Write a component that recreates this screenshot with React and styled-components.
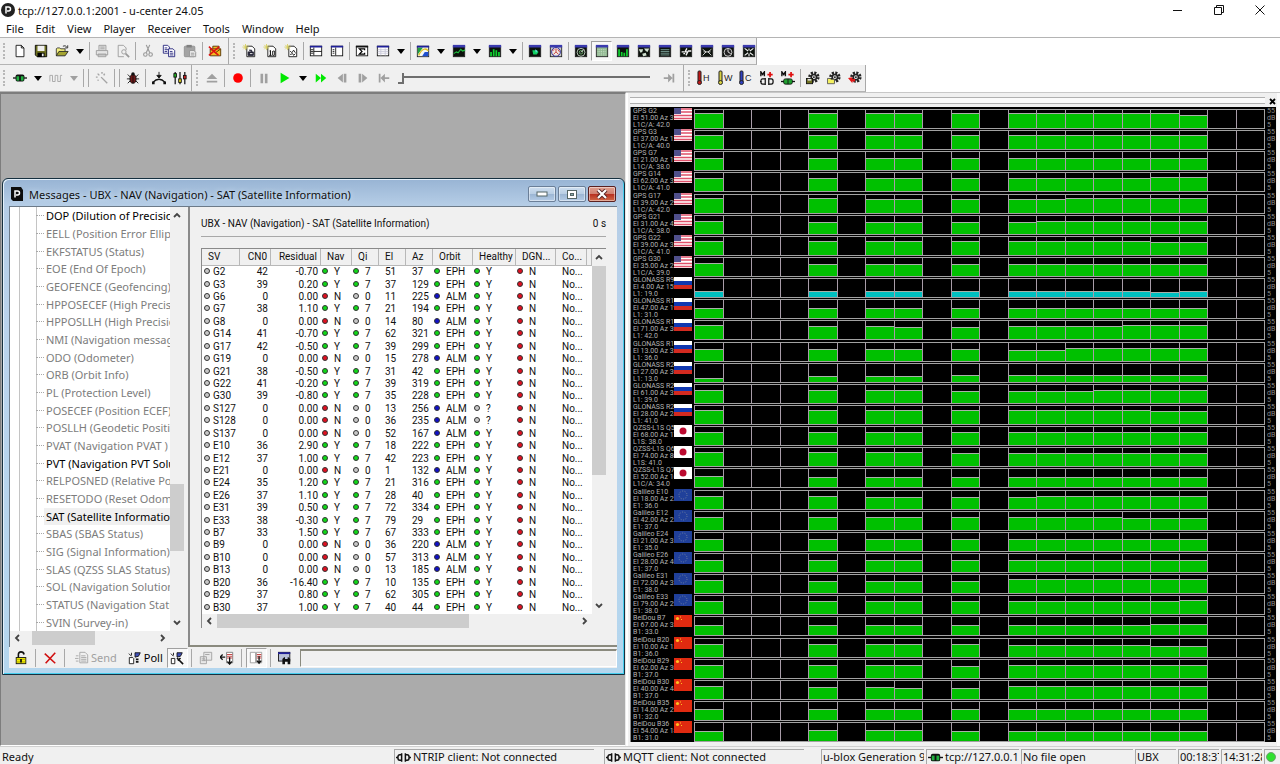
import React from "react";
import styled, { createGlobalStyle, css } from "styled-components";

const GlobalStyle = createGlobalStyle`
	* {
		box-sizing: border-box;
	}
	body {
		margin: 0;
		background: #fff;
		font-family: "Noto Sans", "Open Sans", sans-serif;
		font-size: 11px;
		color: #111;
	}
	button {
		font: inherit;
		color: inherit;
		background: none;
		border: 0;
		padding: 0;
	}
	svg {
		flex: none;
	}
`;

const App = styled.div`
	height: 100vh;
	display: flex;
	flex-direction: column;
	overflow: hidden;
`;

/* ---------- title bar and menu ---------- */

const TitleBar = styled.header`
	height: 20px;
	display: flex;
	align-items: center;
	padding-left: 1px;
`;

const TitleText = styled.h1`
	flex: 1;
	margin: 0;
	padding-left: 3px;
	font-size: 11px;
	font-weight: 400;
`;

const CaptionButton = styled.button`
	width: 41px;
	height: 20px;
	display: flex;
	align-items: center;
	justify-content: center;
`;

const MenuBar = styled.nav`
	height: 18px;
	display: flex;
	align-items: center;
	gap: 12px;
	padding-left: 6px;
	border-bottom: 1px solid #b4b4b4;
`;

/* ---------- toolbars ---------- */

const ToolRow = styled.div`
	height: 27px;
	display: flex;
`;

const ToolGroup = styled.div`
	display: flex;
	align-items: center;
	background: #f0f0f0;
	border-right: 1px solid #a9a9a9;
	border-bottom: 1px solid #b4b4b4;
	padding-right: ${(p) => p.$end || 0}px;
`;

const Grip = styled.span`
	width: 9px;
	height: 16px;
	flex: none;
	border-left: 2px dotted #b8b8b8;
	margin-left: ${(p) => (p.$inset ? 4 : 3)}px;
	margin-right: ${(p) => (p.$inset ? -4 : -3)}px;
`;

const ToolButton = styled.button`
	width: 21px;
	height: 20px;
	flex: none;
	display: flex;
	align-items: center;
	justify-content: center;
	${(p) =>
		p.$pressed &&
		css`
			background: #f8f8f8;
			border: 1px solid #a0a0a0;
			border-right-color: #fff;
			border-bottom-color: #fff;
		`}
`;

const DropButton = styled.button`
	width: 15px;
	height: 20px;
	flex: none;
	display: flex;
	align-items: center;
	justify-content: center;
	&::after {
		content: "";
		border: 4px solid transparent;
		border-top: 5px solid ${(p) => (p.$off ? "#a0a0a0" : "#000")};
		border-bottom: 0;
	}
`;

const Sep = styled.span`
	width: ${(p) => p.$w || 4}px;
	height: 18px;
	flex: none;
	display: flex;
	justify-content: center;
	&::after {
		content: "";
		width: 1px;
		background: #a8a8a8;
	}
`;

const ViewButtons = styled.div`
	width: 185px;
	display: grid;
	grid-template-columns: repeat(9, 1fr);
	justify-items: center;
`;

const Slider = styled.input`
	appearance: none;
	width: 252px;
	height: 16px;
	margin: 0 8px 0 4px;
	background: linear-gradient(#6e6e6e, #6e6e6e) 5px 6px / 100% 2px no-repeat;
	&::-webkit-slider-thumb {
		appearance: none;
		width: 6px;
		height: 11px;
		background: #f0f0f0;
		border-right: 2px solid #6e6e6e;
		border-bottom: 2px solid #6e6e6e;
	}
`;

/* ---------- workspace ---------- */

const Workspace = styled.main`
	flex: 1;
	min-height: 0;
	display: flex;
	background: #f0f0f0;
`;

const Mdi = styled.section`
	position: relative;
	flex: 629 1 0;
	min-width: 0;
	background: #ababab;
	border: 1px solid #7d7d7d;
	border-top-width: 2px;
	border-right-color: #e8e8e8;
	border-bottom-color: #fff;
`;

const ChildWindow = styled.article`
	position: absolute;
	top: 84px;
	left: 1px;
	right: 0;
	height: 497px;
	display: flex;
	flex-direction: column;
	padding: 0 7px 6px 6px;
	border: 1px solid #16303f;
	border-radius: 6px 6px 0 0;
	background: linear-gradient(#98b4d4, #b5cde6 26px, #bad3ec 150px, #b4d6ee);
	box-shadow: inset 1px 1px 0 #e4f0fa, inset -1px -1px 0 #45cdee;
`;

const ChildTitle = styled.header`
	height: 27px;
	flex: none;
	display: flex;
	align-items: center;
	gap: 2px;
	padding: 3px 1px 0;
`;

const ChildHeading = styled.h2`
	flex: 1;
	margin: 0;
	padding-left: 3px;
	font-size: 11px;
	font-weight: 400;
	text-shadow: 0 0 5px #dcecfa;
`;

const AeroButton = styled.button`
	width: 28px;
	height: 16px;
	display: flex;
	align-items: center;
	justify-content: center;
	border: 1px solid ${(p) => (p.$close ? "#5a2020" : "#6b7f98")};
	border-radius: 2px;
	box-shadow: inset 0 0 0 1px rgba(255, 255, 255, 0.45);
	background: ${(p) =>
		p.$close
			? "linear-gradient(#e0a090, #d08070 48%, #b83020 52%, #d06a48)"
			: "linear-gradient(#cfdff0, #b9cee4 48%, #9cb6d4 52%, #b4cce6)"};
`;

const ChildBody = styled.div`
	flex: 1;
	min-height: 0;
	display: flex;
	background: #f0f0f0;
	border-top: 1px solid #6c7a88;
	border-left: 1px solid #6c7a88;
`;

const TreePane = styled.div`
	width: 174px;
	flex: none;
	display: grid;
	grid-template-columns: 1fr 14px;
	grid-template-rows: 1fr 14px;
	padding-bottom: 2px;
`;

const Tree = styled.ul`
	min-width: 0;
	min-height: 0;
	margin: 0;
	padding: 0 0 0 26px;
	display: flex;
	flex-direction: column;
	overflow: hidden;
	list-style: none;
	background:
		linear-gradient(#c4c4c4, #c4c4c4) 9px 0 / 1px 100% no-repeat,
		linear-gradient(#c4c4c4, #c4c4c4) 26px 0 / 1px 100% no-repeat,
		#fff;
`;

const TreeItem = styled.li`
	flex: 1;
	display: flex;
	align-items: center;
	white-space: nowrap;
	color: ${(p) => (p.$active ? "#000" : "#7d7d7d")};
	&::before {
		content: "";
		width: 8px;
		flex: none;
		border-top: 1px dotted #a8a8a8;
	}
`;

const TreeLabel = styled.span`
	flex: 1;
	padding-left: 2px;
	line-height: 17px;
	background: ${(p) => (p.$selected ? "#f0f0f0" : "none")};
`;

const VScroll = styled.div`
	display: flex;
	flex-direction: column;
	align-items: stretch;
	background: #f0f0f0;
`;

const HScroll = styled.div`
	display: flex;
	background: #f0f0f0;
`;

const ScrollButton = styled.button`
	width: 14px;
	height: ${(p) => (p.$flat ? 14 : 16)}px;
	flex: none;
	display: flex;
	align-items: center;
	justify-content: center;
`;

const Space = styled.span`
	flex: ${(p) => p.$grow} 1 0;
	background: ${(p) => (p.$thumb ? "#cdcdcd" : "transparent")};
`;

const DetailPane = styled.div`
	flex: 1;
	min-width: 0;
	display: flex;
	flex-direction: column;
	margin-left: 4px;
	padding: 0 11px 17px;
	border-left: 2px solid #8a8a8a;
	border-bottom: 2px solid #8a8a7e;
	font-family: Roboto, "Liberation Sans", sans-serif;
	font-size: 10px;
`;

const DetailHeading = styled.div`
	height: 30px;
	display: flex;
	align-items: center;
	justify-content: space-between;
	padding-top: 4px;
	border-bottom: 1px solid #a8a8a8;
`;

const ListView = styled.div`
	flex: 1;
	min-height: 0;
	margin-top: 11px;
	display: grid;
	grid-template-columns: 1fr 14px;
	grid-template-rows: 1fr 14px;
	border-left: 1px solid #8a8a8a;
	border-top: 1px solid #8a8a8a;
	background: #f0f0f0;
`;

const SatTable = styled.table`
	width: 100%;
	height: 100%;
	table-layout: fixed;
	border-collapse: separate;
	border-spacing: 0;
	background: #fff;
	white-space: nowrap;
`;

const Th = styled.th`
	height: 17px;
	padding: 0 3px 0 6px;
	font-weight: 400;
	line-height: 14px;
	text-align: ${(p) => (p.$right ? "right" : "left")};
	background: #f0f0f0;
	border-right: 1px solid #b8b8b8;
	border-bottom: 1px solid #b8b8b8;
`;

const Td = styled.td`
	padding: 0 3px 0 ${(p) => p.$pad || 1}px;
	line-height: 12px;
	text-align: ${(p) => (p.$right ? "right" : "left")};
`;

const Dot = styled.i`
	display: inline-block;
	width: 6px;
	height: 6px;
	margin-right: ${(p) => p.$gap || 6}px;
	vertical-align: 1px;
	border: 1px solid #333;
	border-radius: 50%;
	background: ${(p) => p.$color};
`;

const ChildTools = styled.div`
	height: 21px;
	flex: none;
	display: flex;
	align-items: center;
	padding-left: 1px;
	background: #f0f0f0;
`;

const TextTool = styled.button`
	height: 20px;
	display: flex;
	align-items: center;
	gap: 2px;
	padding: 0 4px 0 7px;
	color: ${(p) => (p.disabled ? "#a0a0a0" : "#000")};
`;

const MessageField = styled.input`
	flex: 1;
	min-width: 0;
	height: 18px;
	margin-left: 4px;
	background: #f0f0f0;
	border: 1px solid #fff;
	border-top: 2px solid #8a8a7e;
	border-left-color: #8a8a7e;
`;

/* ---------- satellite level docking panel ---------- */

const Dock = styled.aside`
	flex: 651 1 0;
	min-width: 0;
	display: flex;
	flex-direction: column;
	padding: 0 4px 4px;
	border-top: 1px solid #c8c8c8;
	box-shadow: inset 2px 0 0 #fff, inset -3px 0 0 #fafafa;
`;

const DockGrip = styled.div`
	height: 14px;
	flex: none;
	display: flex;
	align-items: center;
	gap: 4px;
	&::before {
		content: "";
		flex: 1;
		height: 5px;
		border: solid #b0b0b0;
		border-width: 1px 0;
		background: #fafafa;
	}
`;

const LevelList = styled.ol`
	flex: 1;
	min-height: 0;
	margin: 0;
	padding: 1px 0 0 2px;
	display: flex;
	flex-direction: column;
	list-style: none;
	background: #000;
	color: #b4b4b4;
	font-family: Roboto, "Liberation Sans", sans-serif;
	font-size: 7px;
	line-height: 7px;
	border-left: 1px solid #8a8a8a;
`;

const LevelRow = styled.li`
	flex: 1;
	min-height: 0;
	display: grid;
	grid-template-columns: 41px 18px 1fr 11px;
`;

const LevelText = styled.div`
	overflow: hidden;
	white-space: pre;
`;

const Cells = styled.div`
	display: flex;
	height: 20px;
	margin: 1px 0 0 2px;
	border: 1px solid #a2a2a2;
	border-left: 0;
`;

const Cell = styled.div`
	flex: 1;
	display: flex;
	align-items: flex-end;
	border-left: 1px solid #a89ca8;
`;

const Bar = styled.span`
	width: 100%;
	background: ${(p) => (p.$weak ? "#00c0c0" : "#00c000")};
	border-top: 1px solid #a8b0a8;
`;

const LevelScale = styled.div`
	padding-left: 2px;
	white-space: pre;
	color: #8a8a8a;
`;

/* ---------- status bar ---------- */

const StatusBar = styled.footer`
	height: 18px;
	flex: none;
	display: flex;
	align-items: stretch;
	gap: 2px;
	padding: 2px 0 0 2px;
	background: #f0f0f0;
	border-top: 1px solid #d0d0d0;
`;

const Ready = styled.span`
	flex: 1;
	line-height: 15px;
`;

const Pane = styled.span`
	width: ${(p) => p.$w}px;
	flex: none;
	display: flex;
	align-items: center;
	gap: 2px;
	padding-left: 1px;
	margin-right: ${(p) => p.$after || 0}px;
	border-top: 1px solid #a8a8a8;
	border-left: 1px solid #a8a8a8;
	line-height: 14px;
	overflow: hidden;
	white-space: nowrap;
`;

/* ---------- icons ---------- */

const docPath = "M3.5 1.5h6l3 3v10h-9zM9.5 1.5v3h3";

const Star = () => (
	<path d='M4 0v7M0.5 3.5h7M1.5 1l5 5M6.5 1l-5 5' stroke='#d8d060' strokeWidth='1' />
);

const Frame = ({ body = "#0c120c", children }) => (
	<>
		<rect x='1.5' y='2.5' width='13' height='12' fill={body} stroke='#222' />
		<rect x='1' y='1' width='14' height='3' fill='#3a3aae' />
		{children}
	</>
);

const Gear = () => (
	<>
		<circle cx='9' cy='7' r='5' fill='none' stroke='#222' strokeWidth='3' strokeDasharray='2.4 1.5' />
		<circle cx='9' cy='7' r='3' fill='#ddd' stroke='#222' strokeWidth='1.8' />
		<circle cx='9' cy='7' r='1' fill='#222' />
	</>
);

const icons = {
	newFile: <path d={docPath} fill='#fff' stroke='#111' />,
	save: (
		<>
			<path d='M1.5 1.5h13v13h-11l-2-2z' fill='#6e7020' stroke='#000' />
			<rect x='4' y='2' width='8' height='6' fill='#f0f0f0' />
			<rect x='4' y='10' width='8' height='5' fill='#000' />
			<rect x='9' y='11' width='2' height='3' fill='#eee' />
		</>
	),
	open: (
		<>
			<path d='M1.5 13.500V5.500l1-1h3l1 1h5v3' fill='#f4f080' stroke='#333' />
			<path d='M1.500 13.500l3-5h10.500l-3.500 5z' fill='#a4a430' stroke='#222' />
			<path d='M9 2.500q3-1.500 4.500 1M14.500 1.500v3h-3' fill='none' stroke='#222' />
		</>
	),
	print: (
		<g fill='#e4e4e4' stroke='#999'>
			<path d='M4.500 7V1.500h8V7' />
			<path d='M6 3.500h5M6 5.500h5' />
			<path d='M1.500 7.500h13v5h-13zM3.500 11.500h9v3h-9z' />
		</g>
	),
	preview: (
		<g fill='none' stroke='#999'>
			<path d='M9 14.500H2.500v-13h6l3 3V7' />
			<circle cx='9' cy='9' r='2.500' />
			<path d='M11 11l4 4' strokeWidth='2' />
		</g>
	),
	cut: (
		<g fill='none' stroke='#999' strokeWidth='1.300'>
			<path d='M6 1l4 9M10 1L6 10' />
			<circle cx='5' cy='12' r='2' />
			<circle cx='11' cy='12' r='2' />
		</g>
	),
	copy: (
		<g fill='#fff' stroke='#20207a'>
			<path d='M1.500 1.500h5l2 2v7h-7zM3 4.500h3M3 6.500h4M3 8.500h3' />
			<path d='M7.500 5.500h5l2 2v7h-7zM9 8.500h3M9 10.500h4M9 12.500h4' />
		</g>
	),
	paste: (
		<>
			<rect x='1.500' y='2.500' width='12' height='12' rx='1' fill='#a4a4a4' stroke='#909090' />
			<rect x='4' y='1' width='6' height='3' fill='#808080' />
			<path d='M7.500 7.500h5l2 2v5h-7zM9 10.500h4M9 12.500h4' fill='#eee' stroke='#909090' />
		</>
	),
	mailX: (
		<>
			<path d='M2.500 5.500h12v8h-12zM5.500 5V2.500h7V5' fill='#f4b820' stroke='#503000' />
			<path d='M3 6l5.500 4L14 6' stroke='#503000' fill='none' />
			<path d='M1 3l11 10M13 3L1 13' stroke='#e01010' strokeWidth='1.600' />
		</>
	),
	newPacket: (
		<>
			<path d='M5.500 2.500h6l3 3v9h-9z' fill='#fff' stroke='#111' />
			<Star />
			<path d='M7 9h6v4H7zM8 7h3v2' fill='#223' stroke='#223' />
			<path d='M9 11h3' stroke='#fff' />
		</>
	),
	newBinary: (
		<>
			<path d='M5.500 2.500h6l3 3v9h-9z' fill='#fff' stroke='#111' />
			<Star />
			<path d='M7.500 8h1v5M11.500 8h1.500v5h-2V8M8.500 7v6M7 13h3' fill='none' stroke='#111' />
		</>
	),
	newText: (
		<>
			<path d='M5.500 2.500h6l3 3v9h-9z' fill='#fff' stroke='#111' />
			<Star />
			<path d='M7 8l2 2 2-3 2 3M7 12l3-1 1 2 2-2' fill='none' stroke='#111' />
		</>
	),
	layoutList: (
		<>
			<rect x='1.500' y='2.500' width='13' height='11' fill='#fff' stroke='#111' />
			<path d='M1 3h14' stroke='#20209a' strokeWidth='2' />
			<path d='M5.500 4v9M5.500 8.500h9M2 6.500h3M2 8.500h3M2 10.500h3' stroke='#111' />
		</>
	),
	layoutSide: (
		<>
			<rect x='1.500' y='2.500' width='13' height='11' fill='#fff' stroke='#111' />
			<path d='M1 3h14' stroke='#20209a' strokeWidth='2' />
			<path d='M6.500 4v9M3 6.500h2M3 8.500h2M3 10.500h2' stroke='#111' />
		</>
	),
	sigma: (
		<>
			<rect x='1.500' y='2.500' width='13' height='11' fill='#fff' stroke='#111' />
			<path d='M1 3h14' stroke='#111' strokeWidth='2' />
			<path d='M11 7V5.500H5l3 3-3 3h6V10' fill='none' stroke='#000' strokeWidth='1.400' />
		</>
	),
	tableWin: (
		<>
			<rect x='1.500' y='2.500' width='13' height='11' fill='#fff' stroke='#111' />
			<path d='M1 3h14' stroke='#20209a' strokeWidth='2' />
			<path d='M5.500 5v8M10.500 5v8M2 6.500h12M2 8.500h12M2 10.500h12' stroke='#c8c8d8' />
		</>
	),
	map: (
		<>
			<rect x='1.500' y='2.500' width='13' height='12' fill='#f4f8f4' stroke='#222' />
			<path d='M2 4h6l-6 8z' fill='#20a040' />
			<path d='M10 9h4v5H7z' fill='#2050d0' />
			<path d='M3 13q3-6 6-7t5 2' fill='none' stroke='#e0c020' strokeWidth='1.500' />
			<path d='M1 3h14' stroke='#20209a' strokeWidth='2' />
		</>
	),
	lineChart: (
		<Frame>
			<path d='M2 11l3-2 2 1 3-4 2 2 3-1' fill='none' stroke='#20c040' strokeWidth='1.300' />
		</Frame>
	),
	barChart: (
		<Frame>
			<path d='M3.500 14V9M6.500 14V6M9.500 14V7M12.500 14v-5' stroke='#10d030' strokeWidth='2' />
		</Frame>
	),
	cloud: (
		<Frame>
			<path d='M5 7h5l2 2-2 3H6z' fill='#10d060' />
			<path d='M8 6l3 2-2 2z' fill='#60e0e0' />
		</Frame>
	),
	globe: (
		<Frame body='#c8c8c8'>
			<circle cx='8' cy='9' r='5' fill='#f0e8e0' stroke='#20209a' />
			<path d='M8 5v4l-3 3M8 9l3 3M4 8l2-2M10 6l2 3' stroke='#c03030' fill='none' />
		</Frame>
	),
	compass: (
		<Frame>
			<circle cx='8' cy='9.500' r='4.500' fill='none' stroke='#c8d8c8' />
			<circle cx='8' cy='9.500' r='2' fill='none' stroke='#70b070' />
			<path d='M8 9.500l3-3' stroke='#fff' />
		</Frame>
	),
	dotGrid: (
		<Frame body='#90b890'>
			<path d='M3 6.500h10M3 8.500h10M3 10.500h10M3 12.500h10' stroke='#d0e4d0' strokeDasharray='1 1' />
		</Frame>
	),
	levels: (
		<Frame>
			<path d='M3.500 14V6M6.500 14V9M9.500 14V10M12.500 14V6' stroke='#10d030' strokeWidth='2' />
		</Frame>
	),
	world: (
		<Frame>
			<path d='M2 6h5l-1 3-2 1zM8 5h6l-2 4-2-1zM6 11l4-1 1 3-4 1z' fill='#d0e0d0' />
		</Frame>
	),
	text: (
		<Frame>
			<path d='M3 6.500h10M3 8.500h10M3 10.500h10M3 12.500h10' stroke='#80a8a0' />
		</Frame>
	),
	sky: (
		<Frame>
			<path d='M9 5l-2 4h3l-2 4M3 9h3M10 8h4M5 11h2' stroke='#f4f4f4' strokeWidth='1.500' fill='none' />
		</Frame>
	),
	deviation: (
		<Frame>
			<path d='M3 6l4 3-4 4M13 6L9 9l4 4M4 9h8' stroke='#e0e0e0' fill='none' />
		</Frame>
	),
	clock: (
		<Frame>
			<circle cx='8' cy='9.500' r='4.500' fill='#222' stroke='#e0e0e0' />
			<path d='M8 6v3l3 2' stroke='#fff' fill='none' />
		</Frame>
	),
	scatter: (
		<Frame>
			<path d='M3 5l4 3M13 5L9 8M3 13l4-3M13 13l-4-3M8 5v2M8 11v3' stroke='#f0f0f0' strokeWidth='1.300' />
		</Frame>
	),
	plug: (
		<>
			<path d='M0 8h16' stroke='#111' strokeWidth='1.500' />
			<rect x='3' y='4' width='10' height='8' rx='2' fill='#111' />
			<rect x='4' y='6' width='3' height='5' fill='#20b040' />
			<rect x='9' y='6' width='3' height='5' fill='#20b040' />
		</>
	),
	plugOpen: (
		<g fill='none' stroke='#111' strokeWidth='1.600'>
			<path d='M0 8h2M14 8h2M6 3.500v9M10 3.500v9' />
			<path d='M6 5H4Q2 5 2 8t2 3h2M10 5h2q2 0 2 3t-2 3h-2' />
		</g>
	),
	wave: <path d='M1 12V5h3v7h3V5h3v7h3V5h2' fill='none' stroke='#a4a4a4' />,
	wand: (
		<path d='M7 7l7 7M3 3l2 2M8 1v2M1 7h2M11 3l-1 2M3 11l1-1' stroke='#a4a4a4' strokeWidth='1.600' fill='none' />
	),
	bug: (
		<>
			<path d='M2 4l3 3M14 4l-3 3M1 9h14M2 14l3-3M14 14l-3-3' stroke='#111' />
			<ellipse cx='8' cy='9' rx='3.500' ry='5' fill='#701818' stroke='#111' />
			<circle cx='8' cy='3.500' r='2' fill='#111' />
			<path d='M8 6v8' stroke='#111' />
		</>
	),
	antenna: (
		<>
			<path d='M8 1v6M5.500 5L8 8l2.500-3z' stroke='#111' fill='#111' />
			<path d='M1 13q7-7 14 0' fill='none' stroke='#111' strokeWidth='1.600' />
			<path d='M0 12h3v3H0zM13 12h3v3h-3z' fill='#111' />
		</>
	),
	sliders: (
		<>
			<path d='M2.500 1v14M8 1v14M13.500 1v14' stroke='#111' strokeWidth='1.400' />
			<rect x='1' y='3' width='3' height='4' fill='#20b020' stroke='#111' />
			<rect x='6.500' y='9' width='3' height='4' fill='#e0d020' stroke='#111' />
			<rect x='12' y='5' width='3' height='4' fill='#d02020' stroke='#111' />
		</>
	),
	eject: <path d='M2 9l6-6 6 6zM2 11h12v2H2z' fill='#a0a0a0' />,
	record: <circle cx='8' cy='8' r='5.500' fill='#f00' />,
	pause: <path d='M4 3h3v11H4zM9 3h3v11H9z' fill='#a0a0a0' />,
	play: <path d='M3 2l10 6-10 6z' fill='#00e800' />,
	forward: <path d='M2 3l6 5-6 5zM8 3l6 5-6 5z' fill='#00e800' />,
	stepBack: <path d='M9 3L3 8l6 5zM10 3h3v10h-3z' fill='#a0a0a0' />,
	stepNext: <path d='M3 3h3v10H3zM7 3l6 5-6 5z' fill='#a0a0a0' />,
	toStart: <path d='M2 3h2v10H2zM9 3v4h5v2H9v4L4 8z' fill='#a0a0a0' />,
	toEnd: <path d='M12 3h2v10h-2zM7 3v4H2v2h5v4l5-5z' fill='#a0a0a0' />,
	memPlug: (
		<>
			<path d='M1 6V1l2 3 2-3v5' fill='none' stroke='#111' strokeWidth='1.600' />
			<path d='M11.500 1v6M8.500 4h6' stroke='#e01010' strokeWidth='2' />
			<path d='M6 9H3q-2 0-2 3t2 3h3M0 12h2M10 9h3q2 0 2 3t-2 3h-3M6 8v8M10 8v8' fill='none' stroke='#111' strokeWidth='1.400' />
		</>
	),
	memPlugOn: (
		<>
			<path d='M1 6V1l2 3 2-3v5' fill='none' stroke='#111' strokeWidth='1.600' />
			<path d='M11.500 1v6M8.500 4h6' stroke='#e01010' strokeWidth='2' />
			<path d='M0 12h16' stroke='#111' strokeWidth='1.500' />
			<rect x='3' y='9' width='10' height='6' rx='2' fill='#20a030' stroke='#111' />
			<path d='M8 9v6' stroke='#111' />
		</>
	),
	gearSave: (
		<>
			<Gear />
			<rect x='0.500' y='8.500' width='7' height='6' fill='#6e7020' stroke='#111' />
			<rect x='2' y='9' width='4' height='2' fill='#ddd' />
		</>
	),
	gearOpen: (
		<>
			<Gear />
			<path d='M0.500 14.500v-6h3l1 1h4v5z' fill='#f4f060' stroke='#555' />
		</>
	),
	gearReset: (
		<>
			<Gear />
			<path d='M0 8l5-1v2h3v3H5v2z' fill='#e01818' />
		</>
	),
	lock: (
		<>
			<path d='M5 8V4q0-3 3-3t3.500 3' fill='none' stroke='#111' strokeWidth='1.800' />
			<rect x='2.500' y='7.500' width='11' height='7' fill='#f4f000' stroke='#111' />
			<path d='M3 9.500h10M3 12.500h10' stroke='#a8a000' />
			<path d='M8 9v4' stroke='#111' strokeWidth='2' />
		</>
	),
	redX: <path d='M2 3l12 11M14 2L3 14' stroke='#d01010' strokeWidth='1.800' />,
	send: (
		<g fill='none' stroke='#a4a4a4'>
			<path d='M5.500 1.500h6l3 3v9h-9zM7 5.500h5M7 7.500h6M7 9.500h6M7 11.500h6M1 5.500h3M0 8.500h4M1 11.500h3' />
		</g>
	),
	poll: (
		<>
			<path d='M1.500 7.500h4l1 1v6h-5zM1 3l3 3M4 2v3' fill='#fff' stroke='#111' />
			<path d='M8 2h6l-2 4-4 1z' fill='#4050b8' stroke='#111' />
			<path d='M9 9.500h3M9 12.500h3' stroke='#111' strokeWidth='2' />
		</>
	),
	autoPoll: (
		<>
			<path d='M1.500 8.500h4v6h-4zM1 3l3 3M4 2v3' fill='#fff' stroke='#111' />
			<path d='M8 2h6l-2 4-4 1z' fill='#4050b8' stroke='#111' />
			<path d='M8 8l7 7M12 8l-3 3' stroke='#111' strokeWidth='1.800' />
		</>
	),
	frames: (
		<g fill='#e8e8e8' stroke='#a0a0a0'>
			<path d='M5.500 1.500h9v9h-9zM1.500 6.500h7v8h-7zM7 4h5M3 9h4M3 11h4' />
		</g>
	),
	updates: (
		<>
			<path d='M7.500 1.500h7v12h-7z' fill='#fff' stroke='#777' />
			<path d='M8 4h6M8 6h6M8 8h6' stroke='#c03030' />
			<path d='M0 7h6M3 4L0 7l3 3M11 7v8M8.500 12l2.500 3 2.500-3' fill='none' stroke='#111' strokeWidth='1.500' />
		</>
	),
	autoScroll: (
		<>
			<path d='M1.500 1.500h6v12h-6zM8.500 1.500h6v12h-6z' fill='#fff' stroke='#999' />
			<path d='M9 4h5M9 6h5M9 8h5' stroke='#c03030' />
			<path d='M11.500 6v8M9 11l2.500 3 2.500-3' fill='none' stroke='#111' strokeWidth='1.500' />
		</>
	),
	find: (
		<>
			<rect x='0.500' y='1.500' width='13' height='10' fill='#b8c0d8' stroke='#111' />
			<path d='M0 2.500h14' stroke='#20209a' strokeWidth='2' />
			<path d='M5 15V9l2-2h1v2h3V7h1l2 2v6h-3v-3H8v3z' fill='#111' />
		</>
	),
};

const Icon = ({ name, size = 14 }) => (
	<svg width={size} height={size} viewBox='0 0 16 16' fill='none' aria-hidden='true'>
		{icons[name]}
	</svg>
);

const Thermo = ({ color, letter }) => (
	<svg width='17' height='16' viewBox='0 0 17 16' aria-hidden='true'>
		<rect x='3' y='1' width='3' height='11' rx='1' fill={color} stroke='#222' />
		<circle cx='4.500' cy='12.500' r='2' fill={color} stroke='#222' />
		<text x='8' y='11' fontFamily='Liberation Sans' fontSize='9' fill='#222'>
			{letter}
		</text>
	</svg>
);

const Chevron = ({ dir }) => {
	const paths = {
		up: "M1 6l3-3 3 3",
		down: "M1 2l3 3 3-3",
		left: "M6 1L3 4l3 3",
		right: "M2 1l3 3-3 3",
	};
	return (
		<svg width='8' height='8' viewBox='0 0 8 8' aria-hidden='true'>
			<path d={paths[dir]} fill='none' stroke='#444' strokeWidth='1.800' />
		</svg>
	);
};

const Logo = ({ square }) => (
	<svg width='14' height='14' viewBox='0 0 14 14' aria-hidden='true'>
		{square ? <path d='M1 0h10l2 3v11H3l-2-2z' fill='#0c0c0c' /> : <circle cx='7' cy='7' r='7' fill='#222' />}
		<path d='M5 10.500V4h2.500q2 0 2 2t-2 2H6' fill='none' stroke='#fff' strokeWidth='1.500' />
	</svg>
);

const Flag = ({ country }) => {
	const art = {
		us: (
			<>
				<rect width='18' height='12' fill='#fff' />
				<path d='M0 1h18M0 4h18M0 7.500h18M0 10.500h18' stroke='#e0506a' strokeWidth='1.400' />
				<rect width='7' height='6' fill='#50508c' />
			</>
		),
		ru: (
			<>
				<rect width='18' height='12' fill='#fff' />
				<rect y='4' width='18' height='4' fill='#1038b0' />
				<rect y='8' width='18' height='4' fill='#d42a20' />
			</>
		),
		jp: (
			<>
				<rect width='18' height='12' fill='#fff' />
				<circle cx='9' cy='6' r='3.500' fill='#bc0a30' />
			</>
		),
		eu: (
			<>
				<rect width='18' height='12' fill='#20409a' />
				<circle cx='9' cy='6' r='4' fill='none' stroke='#7080a0' strokeDasharray='1 1.500' />
			</>
		),
		cn: (
			<>
				<rect width='18' height='12' fill='#e02a10' />
				<circle cx='3.500' cy='3.500' r='1.600' fill='#ffc020' />
				<path d='M6.500 1.500v1M7.500 4v1' stroke='#ffc020' />
			</>
		),
	};
	return (
		<svg width='18' height='12' viewBox='0 0 18 12' aria-hidden='true'>
			{art[country]}
		</svg>
	);
};

/* ---------- data ---------- */

const menus = ["File", "Edit", "View", "Player", "Receiver", "Tools", "Window", "Help"];

const viewIcons = ["compass", "dotGrid", "levels", "world", "text", "sky", "deviation", "clock", "scatter"];

const treeItems = [
	"DOP (Dilution of Precision)",
	"EELL (Position Error Ellipse)",
	"EKFSTATUS (Status)",
	"EOE (End Of Epoch)",
	"GEOFENCE (Geofencing)",
	"HPPOSECEF (High Precision)",
	"HPPOSLLH (High Precision)",
	"NMI (Navigation message)",
	"ODO (Odometer)",
	"ORB (Orbit Info)",
	"PL (Protection Level)",
	"POSECEF (Position ECEF)",
	"POSLLH (Geodetic Position)",
	"PVAT (Navigation PVAT )",
	"PVT (Navigation PVT Solution)",
	"RELPOSNED (Relative Position)",
	"RESETODO (Reset Odometer)",
	"SAT (Satellite Information)",
	"SBAS (SBAS Status)",
	"SIG (Signal Information)",
	"SLAS (QZSS SLAS Status)",
	"SOL (Navigation Solution)",
	"STATUS (Navigation Status)",
	"SVIN (Survey-in)",
];
const activeItems = ["DOP", "PVT", "SAT"];

const columns = [
	{ name: "SV", width: 38 },
	{ name: "CN0", width: 31, right: true },
	{ name: "Residual", width: 50, right: true },
	{ name: "Nav", width: 31 },
	{ name: "Qi", width: 27 },
	{ name: "El", width: 27 },
	{ name: "Az", width: 27 },
	{ name: "Orbit", width: 40 },
	{ name: "Healthy", width: 43 },
	{ name: "DGN...", width: 40 },
	{ name: "Co...", width: 31 },
];

// sv, cn0, residual, elevation, azimuth, health
const satellites = [
	["G2", 42, "-0.70", 51, 37],
	["G3", 39, "0.20", 37, 129],
	["G6", 0, "0.00", 11, 225],
	["G7", 38, "1.10", 21, 194],
	["G8", 0, "0.00", 14, 80],
	["G14", 41, "-0.70", 62, 321],
	["G17", 42, "-0.50", 39, 299],
	["G19", 0, "0.00", 15, 278],
	["G21", 38, "-0.50", 31, 42],
	["G22", 41, "-0.20", 39, 319],
	["G30", 39, "-0.80", 35, 228],
	["S127", 0, "0.00", 13, 256, "?"],
	["S128", 0, "0.00", 36, 235, "?"],
	["S137", 0, "0.00", 52, 167],
	["E10", 36, "2.90", 18, 222],
	["E12", 37, "1.00", 42, 223],
	["E21", 0, "0.00", 1, 132],
	["E24", 35, "1.20", 21, 316],
	["E26", 37, "1.10", 28, 40],
	["E31", 39, "0.50", 72, 334],
	["E33", 38, "-0.30", 79, 29],
	["B7", 33, "1.50", 67, 333],
	["B9", 0, "0.00", 36, 220],
	["B10", 0, "0.00", 57, 313],
	["B13", 0, "0.00", 13, 185],
	["B20", 36, "-16.40", 10, 135],
	["B29", 37, "0.80", 62, 305],
	["B30", 37, "1.00", 40, 44],
];

// cells of the history that hold a sample, in the order of the level arrays
const sampled = [0, 4, 6, 7, 9, 11, 12, 13, 14, 15, 16, 17];
const cellCount = 20;

// country, name, elevation and azimuth, signal, levels in dB
const levelRows = [
	["us", "GPS G2", "51.00 Az 37", "L1C/A: 42.0", [43, 43, 43, 43, 43, 43, 43, 43, 43, 43, 43, 40]],
	["us", "GPS G3", "37.00 Az 129", "L1C/A: 40.0", [42, 42, 42, 42, 42, 42, 42, 42, 42, 42, 42, 42]],
	["us", "GPS G7", "21.00 Az 194", "L1C/A: 38.0", [38, 38, 38, 38, 36, 36, 38, 38, 38, 38, 38, 38]],
	["us", "GPS G14", "62.00 Az 321", "L1C/A: 41.0", [41, 41, 41, 41, 41, 41, 41, 41, 41, 41, 43, 43]],
	["us", "GPS G17", "39.00 Az 299", "L1C/A: 42.0", [42, 42, 40, 40, 40, 40, 40, 42, 42, 42, 42, 42]],
	["us", "GPS G21", "31.00 Az 42", "L1C/A: 38.0", [39, 36, 36, 36, 36, 36, 38, 38, 38, 38, 38, 38]],
	["us", "GPS G22", "39.00 Az 319", "L1C/A: 41.0", [41, 41, 41, 41, 41, 41, 41, 41, 41, 41, 38, 38]],
	["us", "GPS G30", "35.00 Az 228", "L1C/A: 39.0", [39, 36, 36, 36, 36, 36, 36, 36, 36, 36, 36, 36]],
	["ru", "GLONASS R9", "4.00 Az 153", "L1: 19.0", [19, 19, 19, 19, 19, 19, 19, 19, 19, 19, 17, 19]],
	["ru", "GLONASS R15", "47.00 Az 19", "L1: 31.0", [31, 31, 31, 31, 31, 31, 31, 31, 31, 31, 31, 31]],
	["ru", "GLONASS R17", "71.00 Az 30", "L1: 42.0", [43, 41, 41, 38, 38, 41, 41, 41, 41, 43, 43, 43]],
	["ru", "GLONASS R18", "13.00 Az 33", "L1: 36.0", [36, 36, 34, 34, 34, 32, 32, 37, 37, 37, 37, 37]],
	["ru", "GLONASS R22", "27.00 Az 30", "L1: 13.0", [12, 18, 18, 18, 20, 20, 20, 20, 20, 20, 20, 20]],
	["ru", "GLONASS R23", "61.00 Az 32", "L1: 39.0", [39, 39, 39, 37, 36, 36, 36, 36, 39, 39, 39, 39]],
	["ru", "GLONASS R24", "28.00 Az 24", "L1: 41.0", [41, 41, 41, 41, 41, 41, 41, 41, 41, 41, 39, 39]],
	["jp", "QZSS-L1S Q5", "68.00 Az 17", "L1S: 38.0", [38, 38, 38, 38, 38, 38, 38, 38, 38, 38, 38, 38]],
	["jp", "QZSS-L1S Q6", "74.00 Az 80", "L1S: 41.0", [41, 41, 41, 41, 40, 40, 38, 38, 38, 38, 38, 38]],
	["jp", "QZSS-L1S Q7", "52.00 Az 16", "L1C/A: 34.0", [35, 32, 32, 32, 32, 32, 32, 32, 32, 32, 32, 32]],
	["eu", "Galileo E10", "18.00 Az 222", "E1: 36.0", [37, 37, 34, 34, 34, 34, 37, 37, 37, 37, 37, 37]],
	["eu", "Galileo E12", "42.00 Az 223", "E1: 37.0", [37, 37, 37, 37, 37, 37, 37, 37, 37, 34, 34, 34]],
	["eu", "Galileo E24", "21.00 Az 316", "E1: 35.0", [36, 34, 36, 36, 36, 36, 36, 36, 36, 36, 36, 36]],
	["eu", "Galileo E26", "28.00 Az 40", "E1: 37.0", [37, 37, 37, 37, 37, 37, 37, 37, 37, 37, 37, 37]],
	["eu", "Galileo E31", "72.00 Az 334", "E1: 38.0", [39, 36, 36, 36, 36, 41, 41, 41, 41, 41, 41, 41]],
	["eu", "Galileo E33", "79.00 Az 29", "E1: 38.0", [38, 38, 38, 38, 38, 38, 38, 38, 38, 38, 38, 41]],
	["cn", "BeiDou B7", "67.00 Az 333", "B1: 33.0", [32, 32, 32, 32, 32, 32, 32, 32, 32, 32, 34, 34]],
	["cn", "BeiDou B20", "10.00 Az 135", "B1: 36.0", [37, 37, 37, 37, 37, 35, 35, 35, 35, 35, 32, 32]],
	["cn", "BeiDou B29", "62.00 Az 305", "B1: 37.0", [37, 37, 37, 37, 35, 38, 38, 38, 38, 38, 38, 38]],
	["cn", "BeiDou B30", "40.00 Az 44", "B1: 37.0", [37, 35, 35, 32, 32, 37, 37, 37, 37, 39, 39, 37]],
	["cn", "BeiDou B35", "14.00 Az 29", "B1: 32.0", [32, 32, 32, 32, 32, 34, 34, 34, 34, 34, 34, 34]],
	["cn", "BeiDou B36", "54.00 Az 18", "B1: 31.0", [31, 33, 33, 33, 31, 31, 31, 31, 31, 31, 31, 31]],
];

/* ---------- parts ---------- */

const Tool = ({ icon, pressed, disabled }) => (
	<ToolButton type='button' aria-label={icon} $pressed={pressed} disabled={disabled}>
		<Icon name={icon} />
	</ToolButton>
);

const Drop = ({ disabled }) => (
	<DropButton type='button' aria-label='More' $off={disabled} disabled={disabled} />
);

function FileToolbar() {
	return (
		<ToolRow>
			<ToolGroup $end={3}>
				<Grip />
				<Tool icon='newFile' />
				<Tool icon='save' />
				<Tool icon='open' />
				<Drop />
				<Sep />
				<Tool icon='print' disabled />
				<Tool icon='preview' disabled />
				<Sep />
				<Tool icon='cut' disabled />
				<Tool icon='copy' />
				<Tool icon='paste' disabled />
				<Sep />
				<Tool icon='mailX' />
			</ToolGroup>
			<ToolGroup $end={1}>
				<Grip $inset />
				<Tool icon='newPacket' />
				<Tool icon='newBinary' />
				<Tool icon='newText' />
				<Sep />
				<Tool icon='layoutList' />
				<Tool icon='layoutSide' />
				<Sep />
				<Tool icon='sigma' />
				<Tool icon='tableWin' />
				<Drop />
				<Sep />
				<Tool icon='map' />
				<Drop />
				<Tool icon='lineChart' />
				<Drop />
				<Tool icon='barChart' />
				<Drop />
				<Sep />
				<Tool icon='cloud' />
				<Tool icon='globe' />
				<Sep />
				<ViewButtons>
					{viewIcons.map((name) => (
						<Tool key={name} icon={name} pressed={name === "dotGrid"} />
					))}
				</ViewButtons>
			</ToolGroup>
		</ToolRow>
	);
}

function PlayerToolbar() {
	return (
		<ToolRow>
			<ToolGroup $end={1}>
				<Grip />
				<Tool icon='plug' />
				<Drop />
				<Tool icon='wave' disabled />
				<Drop disabled />
				<Sep $w={5} />
				<Sep $w={5} />
				<Tool icon='wand' disabled />
				<Sep $w={5} />
				<Sep $w={5} />
				<Tool icon='bug' />
				<Sep $w={5} />
				<Tool icon='antenna' />
				<Tool icon='sliders' />
			</ToolGroup>
			<ToolGroup $end={4}>
				<Grip $inset />
				<Tool icon='eject' disabled />
				<Sep $w={5} />
				<Tool icon='record' />
				<Sep $w={5} />
				<Tool icon='pause' disabled />
				<Tool icon='play' />
				<Drop />
				<Tool icon='forward' />
				<Tool icon='stepBack' disabled />
				<Tool icon='stepNext' disabled />
				<Tool icon='toStart' disabled />
				<Slider type='range' min='0' max='100' defaultValue='0' aria-label='Position' />
				<Tool icon='toEnd' disabled />
			</ToolGroup>
			<ToolGroup>
				<Grip $inset />
				<ToolButton type='button' aria-label='Hot start'>
					<Thermo color='#c01818' letter='H' />
				</ToolButton>
				<ToolButton type='button' aria-label='Warm start'>
					<Thermo color='#d8d040' letter='W' />
				</ToolButton>
				<ToolButton type='button' aria-label='Cold start'>
					<Thermo color='#3040c0' letter='C' />
				</ToolButton>
				<Tool icon='memPlug' />
				<Tool icon='memPlugOn' />
				<Sep />
				<Tool icon='gearSave' />
				<Tool icon='gearOpen' />
				<Tool icon='gearReset' />
			</ToolGroup>
		</ToolRow>
	);
}

// before / thumb / after are relative lengths of the track
function Scroll({ horizontal, before, thumb, after }) {
	const Track = horizontal ? HScroll : VScroll;
	return (
		<Track>
			<ScrollButton type='button' aria-label='Back' $flat={horizontal}>
				<Chevron dir={horizontal ? "left" : "up"} />
			</ScrollButton>
			<Space $grow={before} />
			<Space $grow={thumb} $thumb />
			<Space $grow={after} />
			<ScrollButton type='button' aria-label='Forward' $flat={horizontal}>
				<Chevron dir={horizontal ? "right" : "down"} />
			</ScrollButton>
		</Track>
	);
}

const green = "#10d818";
const red = "#e01020";
const blue = "#1010c8";
const gray = "#c8c8c8";

function SatelliteRow({ data }) {
	const [sv, cn0, residual, el, az, health = "Y"] = data;
	const used = cn0 > 0;
	return (
		<tr>
			<Td $pad={2}>
				<Dot $color={gray} $gap={3} />
				{sv}
			</Td>
			<Td $right>{cn0}</Td>
			<Td $right>{residual}</Td>
			<Td>
				<Dot $color={used ? green : red} />
				{used ? "Y" : "N"}
			</Td>
			<Td>
				<Dot $color={used ? green : gray} />
				{used ? 7 : 0}
			</Td>
			<Td $pad={6}>{el}</Td>
			<Td $pad={6}>{az}</Td>
			<Td>
				<Dot $color={used ? green : blue} />
				{used ? "EPH" : "ALM"}
			</Td>
			<Td>
				<Dot $color={health === "Y" ? green : gray} />
				{health}
			</Td>
			<Td>
				<Dot $color={red} />
				N
			</Td>
			<Td $pad={6}>No...</Td>
			<td />
		</tr>
	);
}

function MessagesWindow() {
	return (
		<ChildWindow>
			<ChildTitle>
				<Logo square />
				<ChildHeading>Messages - UBX - NAV (Navigation) - SAT (Satellite Information)</ChildHeading>
				<AeroButton type='button' aria-label='Minimize'>
					<svg width='12' height='6'>
						<rect x='1' y='1' width='10' height='4' fill='#fff' stroke='#566' />
					</svg>
				</AeroButton>
				<AeroButton type='button' aria-label='Maximize'>
					<svg width='10' height='9'>
						<rect x='0.500' y='0.500' width='9' height='8' fill='#fff' stroke='#566' />
						<rect x='3.500' y='3.500' width='3' height='2' fill='#8aa' stroke='#566' />
					</svg>
				</AeroButton>
				<AeroButton type='button' aria-label='Close' $close>
					<svg width='12' height='10'>
						<path d='M2 1l8 8M10 1L2 9' stroke='#522' strokeWidth='4' />
						<path d='M2 1l8 8M10 1L2 9' stroke='#fff' strokeWidth='2.200' />
					</svg>
				</AeroButton>
			</ChildTitle>
			<ChildBody>
				<TreePane>
					<Tree>
						{treeItems.map((label) => {
							const id = label.split(" ")[0];
							return (
								<TreeItem key={id} $active={activeItems.includes(id)}>
									<TreeLabel $selected={id === "SAT"}>{label}</TreeLabel>
								</TreeItem>
							);
						})}
					</Tree>
					<Scroll before={261} thumb={67} after={64} />
					<Scroll horizontal before={8} thumb={62} after={60} />
				</TreePane>
				<DetailPane>
					<DetailHeading>
						<span>UBX - NAV (Navigation) - SAT (Satellite Information)</span>
						<span>0 s</span>
					</DetailHeading>
					<ListView>
						<SatTable>
							<colgroup>
								{columns.map((c) => (
									<col key={c.name} width={c.width} />
								))}
								<col />
							</colgroup>
							<thead>
								<tr>
									{columns.map((c) => (
										<Th key={c.name} $right={c.right}>
											{c.name}
										</Th>
									))}
									<Th as='td' />
								</tr>
							</thead>
							<tbody>
								{satellites.map((s) => (
									<SatelliteRow key={s[0]} data={s} />
								))}
							</tbody>
						</SatTable>
						<Scroll before={1} thumb={209} after={123} />
						<Scroll horizontal before={1} thumb={252} after={109} />
					</ListView>
				</DetailPane>
			</ChildBody>
			<ChildTools>
				<Tool icon='lock' />
				<Sep $w={8} />
				<Tool icon='redX' />
				<Sep $w={8} />
				<TextTool type='button' disabled>
					<Icon name='send' />
					Send
				</TextTool>
				<TextTool type='button'>
					<Icon name='poll' />
					Poll
				</TextTool>
				<Tool icon='autoPoll' pressed />
				<Sep $w={8} />
				<Tool icon='frames' disabled />
				<Tool icon='updates' />
				<Sep $w={8} />
				<Tool icon='autoScroll' pressed />
				<Sep $w={8} />
				<Tool icon='find' />
				<MessageField aria-label='Message' />
			</ChildTools>
		</ChildWindow>
	);
}

function Level({ value }) {
	if (value === undefined) return <Cell />;
	return (
		<Cell>
			<Bar $weak={value === 19 || value === 17} style={{ height: `${(value - 5) * 2 + 5}%` }} />
		</Cell>
	);
}

function LevelPanel() {
	return (
		<Dock>
			<DockGrip>
				<button type='button' aria-label='Close panel'>
					<svg width='7' height='7' viewBox='0 0 7 7'>
						<path d='M1 1l5 5M6 1L1 6' stroke='#000' strokeWidth='1.800' />
					</svg>
				</button>
			</DockGrip>
			<LevelList>
				{levelRows.map(([country, name, position, signal, levels]) => (
					<LevelRow key={name}>
						<LevelText>{`${name}\nEl ${position}\n${signal}`}</LevelText>
						<Flag country={country} />
						<Cells>
							{Array.from({ length: cellCount }, (_, i) => (
								<Level key={i} value={levels[sampled.indexOf(i)]} />
							))}
						</Cells>
						<LevelScale>{"55\ndB\n5"}</LevelScale>
					</LevelRow>
				))}
			</LevelList>
		</Dock>
	);
}

function Main() {
	return (
		<App>
			<GlobalStyle />
			<TitleBar>
				<Logo />
				<TitleText>tcp://127.0.0.1:2001 - u-center 24.05</TitleText>
				<CaptionButton type='button' aria-label='Minimize'>
					<svg width='10' height='10'>
						<path d='M0 5.500h9' stroke='#111' />
					</svg>
				</CaptionButton>
				<CaptionButton type='button' aria-label='Restore'>
					<svg width='10' height='10'>
						<path d='M0.500 2.500h7v7h-7zM2.500 2V0.500h7v7H8' fill='none' stroke='#111' />
					</svg>
				</CaptionButton>
				<CaptionButton type='button' aria-label='Close'>
					<svg width='10' height='10'>
						<path d='M0.500 0.500l9 9M9.500 0.500l-9 9' stroke='#111' />
					</svg>
				</CaptionButton>
			</TitleBar>
			<MenuBar>
				{menus.map((name) => (
					<button type='button' key={name}>
						{name}
					</button>
				))}
			</MenuBar>
			<FileToolbar />
			<PlayerToolbar />
			<Workspace>
				<Mdi>
					<MessagesWindow />
				</Mdi>
				<LevelPanel />
			</Workspace>
			<StatusBar>
				<Ready>Ready</Ready>
				<Pane $w={200} $after={8}>
					<Icon name='plugOpen' size={15} />
					NTRIP client: Not connected
				</Pane>
				<Pane $w={200} $after={15}>
					<Icon name='plugOpen' size={15} />
					MQTT client: Not connected
				</Pane>
				<Pane $w={103}>u-blox Generation 9</Pane>
				<Pane $w={93}>
					<Icon name='plug' size={15} />
					tcp://127.0.0.1
				</Pane>
				<Pane $w={112}>No file open</Pane>
				<Pane $w={41}>UBX</Pane>
				<Pane $w={41}>00:18:37</Pane>
				<Pane $w={41}>14:31:28</Pane>
				<Pane $w={16}>
					<svg width='10' height='10'>
						<circle cx='5' cy='5' r='4.500' fill='#30e030' stroke='#70a070' />
					</svg>
				</Pane>
			</StatusBar>
		</App>
	);
}

export default Main;
